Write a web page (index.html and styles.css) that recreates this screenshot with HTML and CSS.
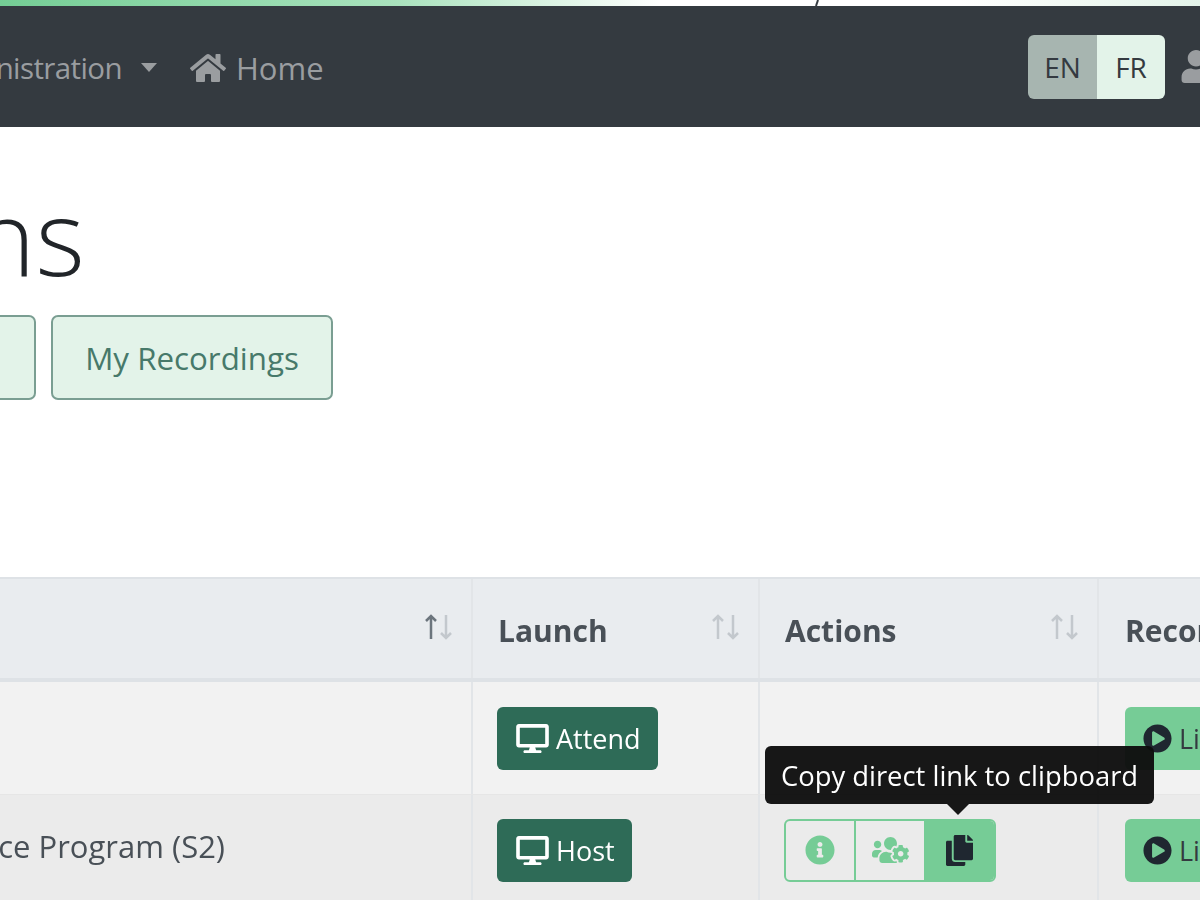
FILE: index.html
```html
<!DOCTYPE html>
<html lang="en">
<head>
<meta charset="utf-8">
<title>Sessions</title>
<link rel="stylesheet" href="styles.css">
</head>
<body>
<div class="page">
  <div class="topbar"><svg class="topmark" viewBox="0 0 10 6"><path d="M7 0L5 6" /></svg></div>
  <nav class="nav">
    <div class="nav-left">
      <a class="nav-link nav-admin"><span class="clip clip-admin">nistration</span><span class="caret"></span></a>
      <a class="nav-link nav-home"><svg class="ic-home" viewBox="0 0 576 512"><path d="M280.37 148.26L96 300.11V464a16 16 0 0 0 16 16l112.06-.29a16 16 0 0 0 15.92-16V368a16 16 0 0 1 16-16h64a16 16 0 0 1 16 16v95.64a16 16 0 0 0 16 16.05L464 480a16 16 0 0 0 16-16V300L295.67 148.26a12.19 12.19 0 0 0-15.3 0zM571.6 251.47L488 182.56V44.05a12 12 0 0 0-12-12h-56a12 12 0 0 0-12 12v72.61L318.47 43a48 48 0 0 0-61 0L4.34 251.47a12 12 0 0 0-1.6 16.9l25.5 31A12 12 0 0 0 45.15 301l235.22-193.74a12.19 12.19 0 0 1 15.3 0L530.9 301a12 12 0 0 0 16.9-1.6l25.5-31a12 12 0 0 0-1.7-16.93z"/></svg>Home</a>
    </div>
    <div class="lang"><span class="lang-en">EN</span><span class="lang-fr">FR</span></div>
    <svg class="ic-user" viewBox="0 0 448 512"><path d="M224 256c70.7 0 128-57.3 128-128S294.7 0 224 0 96 57.3 96 128s57.3 128 128 128zm89.6 32h-16.7c-22.2 10.2-46.9 16-72.9 16s-50.6-5.8-72.9-16h-16.7C60.2 288 0 348.2 0 422.4V464c0 26.5 21.5 48 48 48h352c26.5 0 48-21.5 48-48v-41.6c0-74.2-60.2-134.4-134.4-134.4z"/></svg>
  </nav>
  <main class="main">
    <h1 class="title">ns</h1>
    <div class="tabs">
      <a class="tab tab-stub"></a>
      <a class="tab">My Recordings</a>
    </div>
    <div class="table">
      <div class="row head">
        <div class="cell cell-title"><svg class="sort" viewBox="0 0 30 26"><path class="up on" d="M7 25V2M2 7l5-5 5 5"/><path class="down" d="M22 1v23M17 19l5 5 5-5"/></svg></div>
        <div class="cell">Launch<svg class="sort" viewBox="0 0 30 26"><path class="up" d="M7 25V2M2 7l5-5 5 5"/><path class="down" d="M22 1v23M17 19l5 5 5-5"/></svg></div>
        <div class="cell">Actions<svg class="sort" viewBox="0 0 30 26"><path class="up" d="M7 25V2M2 7l5-5 5 5"/><path class="down" d="M22 1v23M17 19l5 5 5-5"/></svg></div>
        <div class="cell">Recor</div>
      </div>
      <div class="row row-a">
        <div class="cell cell-title"></div>
        <div class="cell"><a class="btn btn-launch"><svg class="ic-desk" viewBox="0 0 576 512"><path d="M528 0H48C21.5 0 0 21.5 0 48v320c0 26.5 21.5 48 48 48h192l-16 48h-72c-13.3 0-24 10.7-24 24s10.7 24 24 24h272c13.3 0 24-10.7 24-24s-10.7-24-24-24h-72l-16-48h192c26.5 0 48-21.5 48-48V48c0-26.5-21.5-48-48-48zm-16 352H64V64h448v288z"/></svg>Attend</a></div>
        <div class="cell"></div>
        <div class="cell"><a class="btn btn-rec"><svg class="ic-play" viewBox="0 0 512 512"><path d="M256 8C119 8 8 119 8 256s111 248 248 248 248-111 248-248S393 8 256 8zm115.7 272l-176 101c-15.8 8.8-35.7-2.5-35.7-21V152c0-18.4 19.8-29.8 35.7-21l176 107c16.4 9.2 16.4 32.9 0 43z"/></svg>Li</a></div>
      </div>
      <div class="row row-b">
        <div class="cell cell-title"><span class="clip clip-name">ce Program (S2)</span></div>
        <div class="cell"><a class="btn btn-launch"><svg class="ic-desk" viewBox="0 0 576 512"><path d="M528 0H48C21.5 0 0 21.5 0 48v320c0 26.5 21.5 48 48 48h192l-16 48h-72c-13.3 0-24 10.7-24 24s10.7 24 24 24h272c13.3 0 24-10.7 24-24s-10.7-24-24-24h-72l-16-48h192c26.5 0 48-21.5 48-48V48c0-26.5-21.5-48-48-48zm-16 352H64V64h448v288z"/></svg>Host</a></div>
        <div class="cell cell-actions">
          <div class="group">
            <a class="gbtn"><svg class="ic-info" viewBox="0 0 512 512"><path d="M256 8C119.043 8 8 119.083 8 256c0 136.997 111.043 248 248 248s248-111.003 248-248C504 119.083 392.957 8 256 8zm0 110c23.196 0 42 18.804 42 42s-18.804 42-42 42-42-18.804-42-42 18.804-42 42-42zm56 254c0 6.627-5.373 12-12 12h-88c-6.627 0-12-5.373-12-12v-24c0-6.627 5.373-12 12-12h12v-64h-12c-6.627 0-12-5.373-12-12v-24c0-6.627 5.373-12 12-12h64c6.627 0 12 5.373 12 12v100h12c6.627 0 12 5.373 12 12v24z"/></svg></a>
            <a class="gbtn"><svg class="ic-cog" viewBox="0 0 640 512"><path d="M610.5 341.3c2.6-14.1 2.6-28.5 0-42.6l25.8-14.9c3-1.7 4.3-5.2 3.3-8.5-6.7-21.6-18.2-41.2-33.2-57.4-2.3-2.5-6-3.1-9-1.4l-25.8 14.9c-10.9-9.3-23.4-16.5-36.9-21.3v-29.8c0-3.4-2.4-6.4-5.7-7.1-22.3-5-45-4.8-66.2 0-3.3.7-5.7 3.7-5.7 7.1v29.8c-13.5 4.8-26 12-36.9 21.3l-25.8-14.9c-2.9-1.7-6.7-1.1-9 1.4-15 16.2-26.5 35.8-33.2 57.4-1 3.3.4 6.8 3.3 8.5l25.8 14.9c-2.6 14.1-2.6 28.5 0 42.6l-25.8 14.9c-3 1.7-4.3 5.2-3.3 8.5 6.7 21.6 18.2 41.1 33.2 57.4 2.3 2.5 6 3.1 9 1.4l25.8-14.9c10.9 9.3 23.4 16.5 36.9 21.3v29.8c0 3.4 2.4 6.4 5.7 7.1 22.3 5 45 4.8 66.2 0 3.3-.7 5.7-3.7 5.7-7.1v-29.8c13.5-4.8 26-12 36.9-21.3l25.8 14.9c2.9 1.7 6.7 1.1 9-1.4 15-16.2 26.5-35.8 33.2-57.4 1-3.3-.4-6.8-3.3-8.5l-25.8-14.9zM496 368.5c-26.8 0-48.5-21.8-48.5-48.5s21.8-48.5 48.5-48.5 48.5 21.8 48.5 48.5-21.7 48.5-48.5 48.5zM96 224c35.3 0 64-28.7 64-64s-28.7-64-64-64-64 28.7-64 64 28.7 64 64 64zm224 32c1.9 0 3.7-.5 5.6-.6 8.3-21.7 20.5-42.1 36.3-59.2 7.4-8 17.9-12.6 28.9-12.6 6.9 0 13.7 1.8 19.6 5.3l7.9 4.6c.8-.5 1.6-.9 2.4-1.4 7-14.6 11.2-30.8 11.2-48 0-61.9-50.1-112-112-112S208 82.1 208 144c0 61.9 50.1 112 112 112zm105.2 194.5c-2.3-1.2-4.6-2.6-6.8-3.9-8.2 4.8-15.3 9.8-27.5 9.8-10.9 0-21.4-4.6-28.9-12.6-18.3-19.8-32.3-43.9-40.2-69.6-10.7-34.5 24.9-49.7 25.8-50.3-.1-2.6-.1-5.2 0-7.8l-7.9-4.6c-3.8-2.2-7-5-9.8-8.1-3.3.2-6.5.6-9.8.6-24.6 0-47.6-6-68.5-16h-8.3C179.6 288 128 339.6 128 403.2V432c0 26.5 21.5 48 48 48h255.4c-3.7-6-6.2-12.8-6.2-20.3v-9.2zM173.1 274.6C161.5 263.1 145.6 256 128 256H64c-35.3 0-64 28.7-64 64v32c0 17.7 14.3 32 32 32h65.9c6.3-47.4 34.9-87.3 75.2-109.4z"/></svg></a>
            <a class="gbtn gbtn-on"><svg class="ic-copy" viewBox="0 0 448 512"><path d="M320 448v40c0 13.255-10.745 24-24 24H24c-13.255 0-24-10.745-24-24V120c0-13.255 10.745-24 24-24h72v296c0 30.879 25.121 56 56 56h168zm0-344V0H152c-13.255 0-24 10.745-24 24v368c0 13.255 10.745 24 24 24h272c13.255 0 24-10.745 24-24V128H344c-13.2 0-24-10.8-24-24zm120.971-31.029L375.029 7.029A24 24 0 0 0 358.059 0H352v96h96v-6.059a24 24 0 0 0-7.029-16.97z"/></svg></a>
          </div>
          <div class="tooltip">Copy direct link to clipboard</div>
        </div>
        <div class="cell"><a class="btn btn-rec"><svg class="ic-play" viewBox="0 0 512 512"><path d="M256 8C119 8 8 119 8 256s111 248 248 248 248-111 248-248S393 8 256 8zm115.7 272l-176 101c-15.8 8.8-35.7-2.5-35.7-21V152c0-18.4 19.8-29.8 35.7-21l176 107c16.4 9.2 16.4 32.9 0 43z"/></svg>Li</a></div>
      </div>
    </div>
  </main>
</div>
</body>
</html>
```

FILE: styles.css
```css
* { box-sizing: border-box; }
html, body { margin: 0; padding: 0; height: 100%; overflow: hidden; background: #fff; }
body { font-family: "Open Sans", "Noto Sans", sans-serif; font-size: 31px; color: #343a40; }
svg { fill: currentColor; display: block; flex-shrink: 0; }
.page { width: 1200px; height: 900px; overflow: hidden; position: relative; filter: blur(0.35px); }
.clip { display: flex; justify-content: flex-end; overflow: hidden; white-space: nowrap; }

.topbar { height: 6px; position: relative; background: linear-gradient(90deg, #74cd95 0, #a9e2bd 33%, #fff 55%, #fff 80%, #e3f3e9 100%); }
.topmark { position: absolute; left: 811px; top: 0; width: 10px; height: 6px; fill: none; stroke: #343a40; stroke-width: 2; }

.nav { height: 121px; background: #343a40; display: flex; align-items: center; color: #9a9da0; overflow: hidden; }
.nav-left { flex: 1; display: flex; align-items: center; min-width: 0; padding-top: 2px; }
.nav-link { display: flex; align-items: center; white-space: nowrap; }
.clip-admin { width: 122px; font-size: 29.5px; letter-spacing: -0.6px; }
.caret { width: 0; height: 0; margin-left: 19px; border-left: 8px solid transparent; border-right: 8px solid transparent; border-top: 9px solid #9a9da0; }
.nav-home { margin-left: 33px; }
.ic-home { width: 36px; height: 32px; margin-right: 10px; }
.lang { display: flex; height: 64px; border-radius: 6px; overflow: hidden; color: #343a40; font-size: 28px; }
.lang span { display: flex; align-items: center; justify-content: center; }
.lang-en { width: 69px; background: #a7b5b0; }
.lang-fr { width: 68px; background: #e3f3e9; }
.ic-user { width: 30px; height: 33px; margin-left: 16px; margin-right: -11px; }

.title { margin: 0; width: 85px; height: 188px; padding-top: 44px; display: flex; justify-content: flex-end; overflow: hidden; font-weight: 300; font-size: 106px; line-height: 128px; color: #212529; }
.tabs { display: flex; gap: 15px; }
.tab { height: 85px; width: 282px; display: flex; align-items: center; justify-content: center; background: #e3f3e9; border: 2px solid #7a9e92; border-radius: 7px; color: #47796a; font-size: 31.3px; }
.tab-stub { width: 36px; border-left: 0; border-radius: 0 7px 7px 0; }

.table { margin-top: 177px; border-top: 2px solid #dee2e6; }
.row { display: grid; grid-template-columns: 473px 287px 339px 1fr; }
.head { height: 103px; background: #e9ecef; border-bottom: 4px solid #dee2e6; font-weight: 700; font-size: 30px; color: #495057; }
.row-a { height: 113px; background: #f2f2f2; border-bottom: 1px solid #e6e6e6; }
.row-b { height: 110px; background: #ebebeb; }
.cell { position: relative; display: flex; align-items: center; padding-left: 24px; border-right: 2px solid #e2e5e8; white-space: nowrap; }
.head .cell { padding-left: 25px; padding-top: 4px; }
.cell:last-child { border-right: 0; padding-left: 26px; }
.cell-title { padding-left: 0; }
.head .cell-title { padding-left: 0; }
.sort { position: absolute; right: 17px; top: 35px; width: 30px; height: 26px; fill: none; stroke-width: 2.5; stroke: #c3c8cd; }
.sort .on { stroke: #6c757d; }

.btn { display: flex; align-items: center; height: 63px; padding: 0 17px 0 19px; border-radius: 6px; font-size: 27px; }
.btn-launch { background: #2e6b57; color: #fff; }
.btn-rec { background: #76cc96; color: #343a40; width: 120px; padding-left: 18px; }
.ic-desk { width: 33px; height: 29px; margin-right: 7px; }
.ic-play { width: 29px; height: 29px; margin-right: 7px; color: #1f2730; }

.clip-name { width: 225px; color: #495057; margin-bottom: 8px; }
.group { display: flex; height: 63px; border: 2px solid #76cc96; border-radius: 6px; overflow: hidden; }
.gbtn { display: flex; align-items: center; justify-content: center; width: 70px; color: #76cc96; border-right: 2px solid #76cc96; }
.gbtn:nth-child(2) { width: 68px; border-right: 0; }
.gbtn-on { border: 0; background: #76cc96; color: #1f2730; }
.ic-info { width: 30px; height: 30px; }
.ic-cog { width: 37px; height: 30px; }
.ic-copy { width: 27px; height: 31px; }
.tooltip { position: absolute; left: 5px; top: -49px; height: 58px; width: 389px; display: flex; align-items: center; justify-content: center; background: rgba(14, 14, 14, 0.96); color: #fff; border-radius: 6px; font-size: 27.4px; }
.tooltip::after { content: ""; position: absolute; left: 182px; bottom: -11px; border-left: 11px solid transparent; border-right: 11px solid transparent; border-top: 11px solid rgba(14, 14, 14, 0.96); }
```
